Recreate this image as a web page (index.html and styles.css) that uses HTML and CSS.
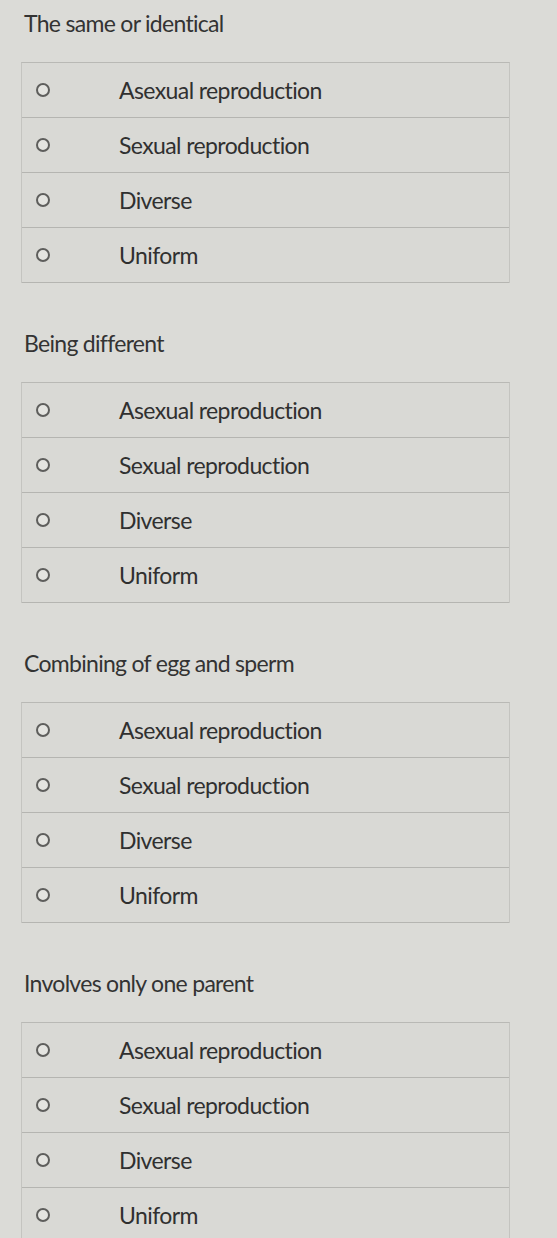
FILE: index.html
```html
<!DOCTYPE html>
<html>
<head>
<meta charset="utf-8">
<link rel="stylesheet" href="styles.css">
</head>
<body>
<main class="quiz">
  <section class="question">
    <h2 class="prompt">The same or identical</h2>
    <div class="options">
      <label class="option"><span class="radio"></span><span class="label">Asexual reproduction</span></label>
      <label class="option"><span class="radio"></span><span class="label">Sexual reproduction</span></label>
      <label class="option"><span class="radio"></span><span class="label">Diverse</span></label>
      <label class="option"><span class="radio"></span><span class="label">Uniform</span></label>
    </div>
  </section>
  <section class="question">
    <h2 class="prompt">Being different</h2>
    <div class="options">
      <label class="option"><span class="radio"></span><span class="label">Asexual reproduction</span></label>
      <label class="option"><span class="radio"></span><span class="label">Sexual reproduction</span></label>
      <label class="option"><span class="radio"></span><span class="label">Diverse</span></label>
      <label class="option"><span class="radio"></span><span class="label">Uniform</span></label>
    </div>
  </section>
  <section class="question">
    <h2 class="prompt">Combining of egg and sperm</h2>
    <div class="options">
      <label class="option"><span class="radio"></span><span class="label">Asexual reproduction</span></label>
      <label class="option"><span class="radio"></span><span class="label">Sexual reproduction</span></label>
      <label class="option"><span class="radio"></span><span class="label">Diverse</span></label>
      <label class="option"><span class="radio"></span><span class="label">Uniform</span></label>
    </div>
  </section>
  <section class="question">
    <h2 class="prompt">Involves only one parent</h2>
    <div class="options">
      <label class="option"><span class="radio"></span><span class="label">Asexual reproduction</span></label>
      <label class="option"><span class="radio"></span><span class="label">Sexual reproduction</span></label>
      <label class="option"><span class="radio"></span><span class="label">Diverse</span></label>
      <label class="option"><span class="radio"></span><span class="label">Uniform</span></label>
    </div>
  </section>
</main>
</body>
</html>
```
FILE: styles.css
```css
html, body {
  margin: 0;
  padding: 0;
  background: #dbdbd7;
}
body {
  font-family: Lato, "Open Sans", "Liberation Sans", sans-serif;
  color: #383838;
  overflow: hidden;
}
.quiz {
  display: flex;
  flex-direction: column;
  gap: 47px;
  padding: 10px 47px 0 21px;
}
.question {
  display: flex;
  flex-direction: column;
}
.prompt {
  margin: 0 0 26px 3px;
  font-size: 23px;
  font-weight: 400;
  line-height: 26px;
  letter-spacing: -0.7px;
  color: #333333;
}
.options {
  display: flex;
  flex-direction: column;
  border-top: 1px solid #b9b9b5;
  border-left: 1px solid #c4c4c0;
  border-right: 1px solid #c4c4c0;
  background: #d9d9d5;
}
.option {
  display: flex;
  align-items: center;
  height: 54px;
  border-bottom: 1px solid #b5b5b1;
  padding-left: 14px;
}
.radio {
  width: 10px;
  height: 10px;
  border: 2px solid #5e5e5c;
  border-radius: 50%;
  flex: none;
  background: #e4e4e0;
}
.label {
  margin-left: 69px;
  font-size: 23px;
  letter-spacing: -0.6px;
  color: #303030;
}
```
